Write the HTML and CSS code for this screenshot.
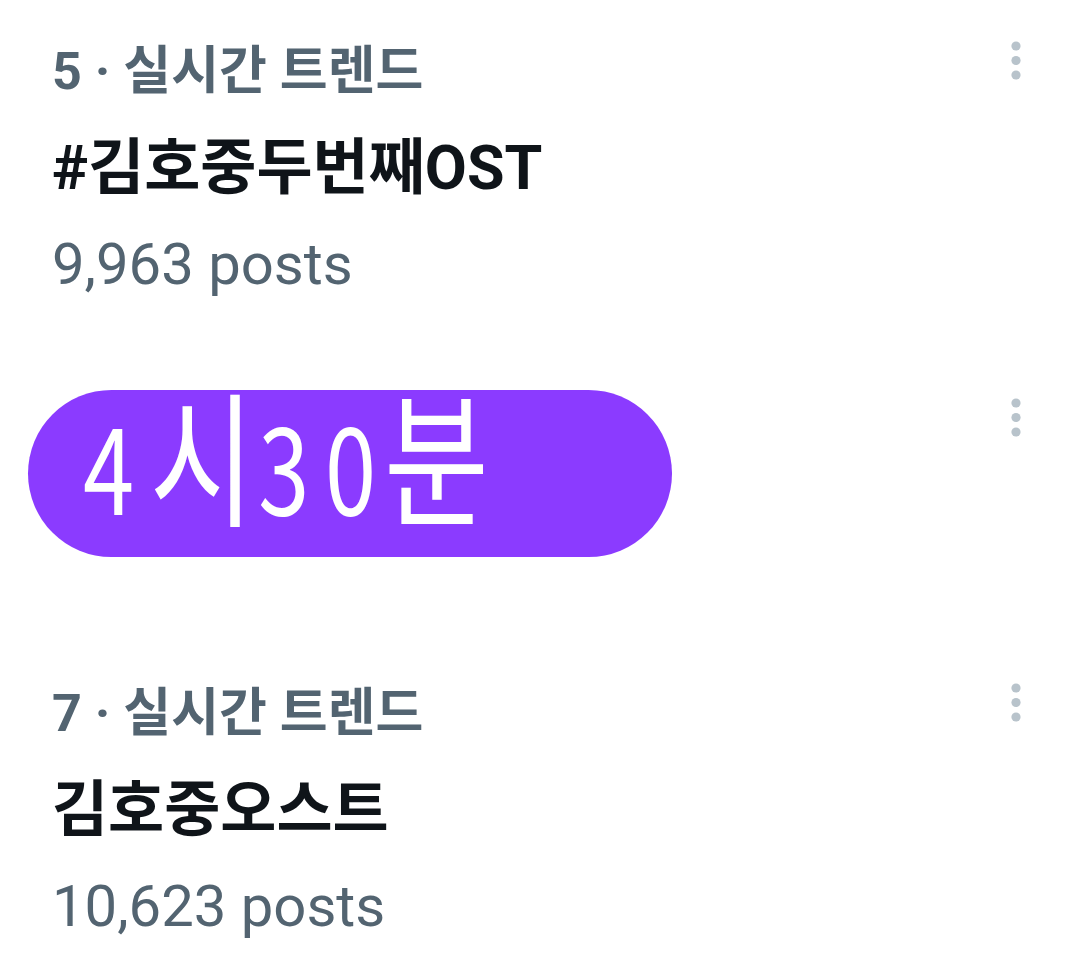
FILE: index.html
```html
<!DOCTYPE html>
<html lang="ko">
<head>
    <meta charset="UTF-8">
    <meta name="viewport" content="width=device-width, initial-scale=1.0">
    <title>실시간 트렌드</title>
    <link rel="stylesheet" href="styles.css">
</head>
<body>
    <div class="trends">
        <div class="trend">
            <div class="trend-body">
                <div class="trend-meta">5 · 실시간 트렌드</div>
                <div class="trend-name">#김호중두번째OST</div>
                <div class="trend-count">9,963 posts</div>
            </div>
            <button class="more" aria-label="더 보기">
                <svg viewBox="0 0 24 40" width="24" height="40"><circle cx="12" cy="6" r="4.6"/><circle cx="12" cy="20.5" r="4.6"/><circle cx="12" cy="35" r="4.6"/></svg>
            </button>
        </div>

        <div class="trend trend-covered">
            <div class="trend-body">
                <div class="sticker">
                    <div class="sticker-text"><span class="num">4</span><span class="kor">시</span><span class="num">3</span><span class="num num-end">0</span><span class="kor">분</span></div>
                </div>
            </div>
            <button class="more" aria-label="더 보기">
                <svg viewBox="0 0 24 40" width="24" height="40"><circle cx="12" cy="6" r="4.6"/><circle cx="12" cy="20.5" r="4.6"/><circle cx="12" cy="35" r="4.6"/></svg>
            </button>
        </div>

        <div class="trend">
            <div class="trend-body">
                <div class="trend-meta">7 · 실시간 트렌드</div>
                <div class="trend-name">김호중오스트</div>
                <div class="trend-count">10,623 posts</div>
            </div>
            <button class="more" aria-label="더 보기">
                <svg viewBox="0 0 24 40" width="24" height="40"><circle cx="12" cy="6" r="4.6"/><circle cx="12" cy="20.5" r="4.6"/><circle cx="12" cy="35" r="4.6"/></svg>
            </button>
        </div>
    </div>
</body>
</html>
```

FILE: styles.css
```css
body {
    margin: 0;
    background: #fff;
    font-family: Roboto, "Noto Sans CJK KR", sans-serif;
    overflow: hidden;
}
.trends {
    display: flex;
    flex-direction: column;
}
.trend {
    display: grid;
    grid-template-columns: 1fr auto;
    padding: 24px 52px 0 52px;
    height: 357px;
    box-sizing: border-box;
}
.trend-covered {
    height: 285px;
}
.trend-meta {
    color: #536471;
    font-size: 52px;
    font-weight: 700;
    line-height: 96px;
}
.trend-name {
    color: #0f1419;
    font-size: 61px;
    font-weight: 700;
    line-height: 96px;
}
.trend-count {
    color: #536471;
    font-size: 58px;
    line-height: 96px;
}
.more {
    background: none;
    border: none;
    padding: 0;
    margin-top: 16px;
    align-self: start;
    fill: #b8c3cb;
    cursor: pointer;
}
.more svg {
    display: block;
}
.trend-covered .trend-body {
    margin-left: -24px;
}
.sticker {
    width: 644px;
    height: 167px;
    margin-top: 9px;
    background: #8b3bff;
    border-radius: 84px;
    padding: 0 0 0 55px;
    box-sizing: border-box;
}
.sticker-text {
    color: #fff;
    font-family: "Noto Sans CJK KR", sans-serif;
    font-weight: 400;
    line-height: 124px;
    white-space: nowrap;
    transform: scaleX(0.78);
    transform-origin: left center;
}
.sticker-text .num {
    font-size: 118px;
    margin-right: 20px;
}
.sticker-text .num-end {
    margin-right: 10px;
}
.sticker-text .kor {
    font-size: 146px;
    margin-right: 5px;
}
```
